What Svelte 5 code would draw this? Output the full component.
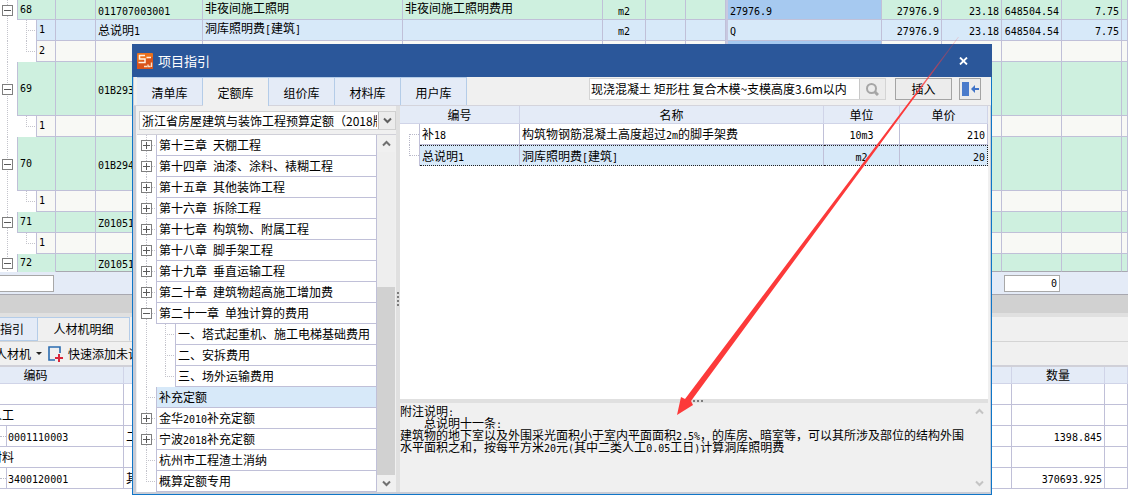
<script>
  const cells = (values) => Array.from({ length: 13 }, (_, i) => values[i] ?? '');

  const items = [
    { no: '68', size: 'first', kind: 'group', cells: cells(['', '011707003001', '非夜间施工照明', '非夜间施工照明费用', 'm2', '', '', '27976.9', '27976.9', '23.18', '648504.54', '7.75']) },
    { no: '1', size: 'row', kind: 'picked', child: true, more: true, cells: cells(['', '总说明1', '洞库照明费[建筑]', '', 'm2', '', '', 'Q', '27976.9', '23.18', '648504.54', '7.75']) },
    { no: '2', size: 'row', kind: 'plain', child: true, cells: cells([]) },
    { no: '69', size: 'tall', kind: 'group', cells: cells(['', '01B293']) },
    { no: '1', size: 'row', kind: 'plain', child: true, cells: cells([]) },
    { no: '70', size: 'tall', kind: 'group', cells: cells(['', '01B294']) },
    { no: '1', size: 'row', kind: 'plain', child: true, cells: cells([]) },
    { no: '71', size: 'row', kind: 'group', cells: cells(['', 'Z01051']) },
    { no: '1', size: 'row', kind: 'plain', child: true, cells: cells([]) },
    { no: '72', size: 'last', kind: 'group', cells: cells(['', 'Z01051']) }
  ];

  const align = ['', '', 'top', 'top', 'mid', '', '', 'wide', 'num', 'num', 'num', 'num', ''];

  const chapters = [
    { name: '第十三章 天棚工程', mark: '+' },
    { name: '第十四章 油漆、涂料、裱糊工程', mark: '+' },
    { name: '第十五章 其他装饰工程', mark: '+' },
    { name: '第十六章 拆除工程', mark: '+' },
    { name: '第十七章 构筑物、附属工程', mark: '+' },
    { name: '第十八章 脚手架工程', mark: '+' },
    { name: '第十九章 垂直运输工程', mark: '+' },
    { name: '第二十章 建筑物超高施工增加费', mark: '+' },
    { name: '第二十一章 单独计算的费用', mark: '-' },
    { name: '一、塔式起重机、施工电梯基础费用', sub: true },
    { name: '二、安拆费用', sub: true },
    { name: '三、场外运输费用', sub: true, end: true },
    { name: '补充定额', picked: true },
    { name: '金华2010补充定额', mark: '+' },
    { name: '宁波2018补充定额', mark: '+' },
    { name: '杭州市工程渣土消纳' },
    { name: '概算定额专用', end: true }
  ];

  const libraries = ['清单库', '定额库', '组价库', '材料库', '用户库'];
  let library = $state('定额库');
  let keyword = $state('现浇混凝土 矩形柱 复合木模~支模高度3.6m以内');

  const quotas = [
    { code: '补18', name: '构筑物钢筋混凝土高度超过2m的脚手架费', unit: '10m3', price: '210' },
    { code: '总说明1', name: '洞库照明费[建筑]', unit: 'm2', price: '20', picked: true }
  ];

  const notes = [
    '附注说明:',
    '    总说明十一条:',
    '建筑物的地下室以及外围采光面积小于室内平面面积2.5%，的库房、暗室等，可以其所涉及部位的结构外围',
    '水平面积之和，按每平方米20元(其中二类人工0.05工日)计算洞库照明费'
  ];

  const resources = [
    { code: '' },
    { code: '人工' },
    { code: '0001110003', child: true, name: '二类人工', qty: '1398.845' },
    { code: '材料' },
    { code: '3400120001', child: true, name: '其他材料费', qty: '370693.925' }
  ];

  const runs = (text) => text.match(/[\x20-\x7e]+|[^\x20-\x7e]+/g) ?? [];
  const latin = (run) => /^[\x20-\x7e]/.test(run);
</script>

{#snippet mix(text)}{#each runs(text) as run}{#if latin(run)}<span class="latin">{run}</span>{:else}{run}{/if}{/each}{/snippet}

{#snippet toggle(mark)}
  <svg class="toggle" width="11" height="11" viewBox="0 0 11 11" shape-rendering="crispEdges">
    <rect x="0.5" y="0.5" width="10" height="10" fill="#fff" stroke="#7f7f7f" />
    <path d={mark === '+' ? 'M2 5.5H9M5.5 2V9' : 'M2 5.5H9'} stroke="#5a5a5a" />
  </svg>
{/snippet}

{#snippet chevron(up)}
  <svg width="9" height="7" viewBox="0 0 9 7"><path d={up ? 'M1 5.5L4.5 2L8 5.5' : 'M1 1.5L4.5 5L8 1.5'} fill="none" stroke="currentColor" stroke-width="2" /></svg>
{/snippet}

<div class="page">
  <table class="items">
    <colgroup>
      <col class="w56" /><col class="w40" /><col class="w107" /><col class="w200" /><col class="w200" />
      <col class="w43" /><col class="w40" /><col class="w40" /><col class="w156" /><col class="w60" />
      <col class="w60" /><col class="w60" /><col class="w60" /><col />
    </colgroup>
    <tbody>
      {#each items as item}
        <tr class="{item.size} {item.kind}">
          <td class="tree">
            <div class="branch">
              <span class="rail">{#if !item.child}{@render toggle('-')}{/if}</span>
              {#if item.child}<span class="elbow" class:more={item.more}></span>{/if}
              <span class="no">{@render mix(item.no)}</span>
            </div>
          </td>
          {#each item.cells as value, i}
            <td class={align[i]}>{@render mix(value)}</td>
          {/each}
        </tr>
      {/each}
    </tbody>
  </table>

  <div class="totals">
    <input class="total" aria-label="编号合计" />
    <input class="total sum" aria-label="合计" value="0" />
  </div>
  <div class="splitter"></div>

  <nav class="tabs lower">
    <button class="guide">指引</button>
    <button class="active">人材机明细</button>
  </nav>
  <div class="toolbar">
    <button class="tool cut">人材机<i class="caret"></i></button>
    <button class="tool">
      <svg width="15" height="16" viewBox="0 0 15 16">
        <path d="M12 7V1H1V14H7" fill="none" stroke="#2b6cb0" stroke-width="1.6" />
        <path d="M11 8V16M7 12H15" stroke="#d9263a" stroke-width="2" />
      </svg>
      快速添加未计价
    </button>
  </div>
  <table class="resources">
    <colgroup><col class="w124" /><col /><col class="w93" /><col class="w23" /></colgroup>
    <thead>
      <tr><th class="shift">编码</th><th></th><th>数量</th><th></th></tr>
    </thead>
    <tbody>
      {#each resources as r}
        <tr>
          <td class={r.child ? 'leaf' : 'root'}>
            {#if r.child}
              <div class="twig"><span class="stub"></span><span class="code">{@render mix(r.code)}</span></div>
            {:else}{r.code}{/if}
          </td>
          <td>{r.name ?? ''}</td>
          <td class="num">{@render mix(r.qty ?? '')}</td>
          <td></td>
        </tr>
      {/each}
    </tbody>
  </table>

  <section class="dialog" aria-label="项目指引">
    <header>
      <svg width="16" height="16" viewBox="0 0 16 16">
        <rect width="16" height="16" rx="1" fill="#e8701e" />
        <path d="M0 9L16 4V15a1 1 0 0 1-1 1H0Z" fill="#d9541a" />
        <path d="M8 2.5H2.5V6H8V9.5H1.5M9.5 4.5H14" fill="none" stroke="#fff3e6" stroke-width="1.5" />
        <path d="M7 13.5H10M11 11.5V13.5H13.5M14.5 9.5V14" fill="none" stroke="#fbe0c8" stroke-width="1.4" />
      </svg>
      <h1>项目指引</h1>
      <button class="close" aria-label="关闭">
        <svg width="9" height="8" viewBox="0 0 9 8"><path d="M1 0.5L8 7.5M8 0.5L1 7.5" stroke="#fff" stroke-width="1.8" /></svg>
      </button>
    </header>

    <div class="bar">
      <nav class="tabs">
        {#each libraries as name}
          <button class:active={library === name} onclick={() => (library = name)}>{name}</button>
        {/each}
      </nav>
      <div class="search">
        <input aria-label="搜索" bind:value={keyword} />
        <button aria-label="查找">
          <svg width="13" height="13" viewBox="0 0 13 13"><circle cx="5.5" cy="5.5" r="4.5" fill="none" stroke="#a6a6a6" stroke-width="2" /><path d="M8.5 8.5L12 12" stroke="#a6a6a6" stroke-width="3" /></svg>
        </button>
      </div>
      <button class="push insert">插入</button>
      <button class="push side" aria-label="收起">
        <svg width="17" height="14" viewBox="0 0 17 14"><rect width="7" height="14" fill="#4a7bcb" /><path d="M9 7L13 3V6H17V8H13V11Z" fill="#3f73c8" /></svg>
      </button>
    </div>

    <div class="body">
      <div class="left">
        <div class="pick">
          <select aria-label="定额库">
            <option>浙江省房屋建筑与装饰工程预算定额（2018版）</option>
          </select>
          <span class="arrow">{@render chevron(false)}</span>
        </div>
        <div class="outline">
          <ul>
            {#each chapters as c}
              <li class:picked={c.picked} class:sub={c.sub}>
                <span class="rail" class:end={c.end && !c.sub}>{#if c.mark}{@render toggle(c.mark)}{/if}</span>
                {#if c.sub}<span class="elbow" class:more={!c.end}></span>{/if}
                <span class="name">{@render mix(c.name)}</span>
              </li>
            {/each}
          </ul>
          <div class="scroll">
            <span class="step">{@render chevron(true)}</span>
            <span class="track"></span>
            <span class="thumb"></span>
            <span class="step">{@render chevron(false)}</span>
          </div>
        </div>
      </div>
      <div class="grip upright"><i></i><i></i><i></i><i></i></div>
      <div class="right">
        <table class="quotas">
          <colgroup><col class="w20" /><col class="w100" /><col /><col class="w76" /><col class="w88" /></colgroup>
          <thead>
            <tr><th colspan="2">编号</th><th>名称</th><th>单位</th><th>单价</th></tr>
          </thead>
          <tbody>
            {#each quotas as q}
              <tr class:picked={q.picked}>
                <td class="link"><span class={q.picked ? 'low' : 'high'}></span></td>
                <td>{@render mix(q.code)}</td>
                <td>{@render mix(q.name)}</td>
                <td class="mid">{@render mix(q.unit)}</td>
                <td class="num">{@render mix(q.price)}</td>
              </tr>
            {/each}
          </tbody>
        </table>
        <div class="blank"></div>
        <div class="grip"><i></i><i></i><i></i><i></i><i></i></div>
        <div class="notes">
          <div class="lines">
            {#each notes as line}<p>{@render mix(line)}</p>{/each}
          </div>
          <div class="faint">{@render chevron(true)}{@render chevron(false)}</div>
        </div>
      </div>
    </div>
  </section>

  <svg class="pointer" width="290" height="380" viewBox="0 0 290 380">
    <defs>
      <linearGradient id="fade" gradientUnits="userSpaceOnUse" x1="282" y1="0" x2="236" y2="62">
        <stop offset="0" stop-color="#fc3a3a" stop-opacity="0.15" />
        <stop offset="1" stop-color="#fc3a3a" />
      </linearGradient>
    </defs>
    <path d="M282 1L14 365L16 369L0 379L4 361L8 363L281 1Z" fill="url(#fade)" />
  </svg>
</div>

<style>
  :global(body) { margin: 0; }
  * { box-sizing: border-box; }
  .page {
    position: relative;
    min-height: 100vh;
    overflow: hidden;
    background: #fff;
    color: #000;
    font: 12px/16px "Noto Sans CJK SC", sans-serif;
  }
  .latin { font-family: "DejaVu Sans Mono", monospace; font-size: 10px; line-height: 0; white-space: pre; }
  button, input, select { font: inherit; color: inherit; margin: 0; padding: 0; border: 0; border-radius: 0; outline: 0; }
  button { white-space: nowrap; }
  svg { display: block; flex: none; }

  table { width: 100%; table-layout: fixed; border-collapse: separate; border-spacing: 0; }
  td, th { padding: 0 2px; border: 0 solid #c0c0d8; border-width: 0 1px 1px 0; white-space: nowrap; overflow: hidden; font-weight: normal; text-align: left; line-height: 16px; }
  th { background: #e4ebf7; border-color: #d0d4e8; text-align: center; }
  .num { text-align: right; }
  .mid { text-align: center; }
  .w20 { width: 20px; } .w23 { width: 23px; } .w40 { width: 40px; } .w43 { width: 43px; }
  .w56 { width: 56px; } .w60 { width: 60px; } .w76 { width: 76px; } .w88 { width: 88px; }
  .w93 { width: 93px; } .w100 { width: 100px; } .w107 { width: 107px; } .w124 { width: 124px; }
  .w156 { width: 156px; } .w200 { width: 200px; }

  .items tr { height: 21px; }
  .items .first { height: 20px; }
  .items .tall { height: 54px; }
  .items .last { height: 18px; }
  .items .last td { border-bottom-color: #a8a8b0; }
  .items .last .no { border-bottom: 0; }
  .group td { background: #cef0df; }
  .picked td { background: #d7e9f9; }
  .plain td { background: #f8f9f5; }
  .items td.top { vertical-align: top; }
  .items td.wide { border-left: 2px solid #c8c8e0; }
  .items .first td.wide, .items tr:nth-child(3) td.wide { background: #a6c9f0; }
  .items .tree { padding: 0; border-bottom: 0; background: #fff; }
  .branch { display: flex; }
  .branch .rail { width: 17px; }
  .branch .no { flex: 1; display: flex; align-items: center; padding-left: 2px; border: 0 solid #c0c0d8; border-width: 0 0 1px 1px; }
  .first .branch { height: 20px; }
  .row .branch { height: 21px; }
  .tall .branch { height: 54px; }
  .last .branch { height: 18px; }
  .group .no { background: #cef0df; }
  .picked .no { background: #d7e9f9; }
  .plain .no { background: #f8f9f5; }

  .rail { display: flex; align-items: center; width: 19px; flex: none; background: repeating-linear-gradient(#c4c4cc 0 1px, #fff 1px 2px) 7px 0 / 1px 100% no-repeat; }
  .rail :global(svg) { margin-left: 2px; }
  .elbow { width: 19px; flex: none; background: repeating-linear-gradient(#c4c4cc 0 1px, #fff 1px 2px) 9px 0 / 1px 50% no-repeat, repeating-linear-gradient(90deg, #c4c4cc 0 1px, #fff 1px 2px) 9px 50% / 10px 1px no-repeat; }
  .elbow.more { background-size: 1px 100%, 10px 1px; }

  .totals { display: flex; justify-content: space-between; height: 23px; padding: 3px 68px 2px 0; background: #e4ebf7; border-bottom: 1px solid #a8a8b0; }
  .total { width: 54px; border: 1px solid #a8a8a8; border-left: 0; background: #fff; }
  .sum { width: 56px; border-left: 1px solid #a8a8a8; padding-right: 2px; text-align: right; font: 10px "DejaVu Sans Mono", monospace; }
  .splitter { height: 22px; background: #d1d1d1; border-bottom: 4px solid #e0e0e0; }

  .tabs { display: flex; }
  .tabs button { background: #e4ebf7; border: 1px solid #b4cce8; border-left-width: 0; text-align: center; }
  .tabs button.active { background: #f0f0f0; border-bottom-color: #f0f0f0; }
  .lower { height: 25px; background: #f0f0f0; border-bottom: 1px solid #d4d4d4; }
  .lower button { width: 92px; }
  .lower .guide { width: 38px; padding-right: 16px; text-align: right; }
  .toolbar { display: flex; align-items: center; gap: 6px; height: 25px; background: #f0f0f0; border-bottom: 2px solid #d0d0d8; }
  .tool { display: flex; align-items: center; gap: 5px; background: none; }
  .cut { margin-left: -5px; }
  .caret { border: 3px solid transparent; border-top-color: #222; border-bottom: 0; }

  .resources tr { height: 21px; }
  .resources thead tr { height: 17px; }
  .resources th.shift { padding-right: 54px; }
  .resources .root { text-indent: -12px; }
  .resources .leaf { padding: 0; }
  .twig { display: flex; align-items: center; }
  .stub { width: 6px; border-top: 1px dotted #b8b8c8; }
  .code { height: 20px; line-height: 20px; padding-left: 1px; border-left: 1px solid #c0c0d8; }

  .dialog { position: absolute; inset: 44px 136px 0 132px; display: flex; flex-direction: column; background: #f0f0f0; border: 1px solid #0f76c8; border-top: 0; }
  header { display: flex; align-items: center; gap: 5px; flex: none; height: 33px; margin: 0 -1px; padding: 0 24px 0 5px; background: #2b579a; color: #fff; }
  h1 { flex: 1; margin: 0; font-size: 13px; font-weight: normal; }
  .close { background: none; }
  .bar { display: flex; flex: none; height: 29px; padding: 0 10px 0 3px; border-left: 1px solid #c8ccd6; border-bottom: 1px solid #d4d4dc; }
  .bar .tabs { flex: 1; }
  .bar .tabs button { width: 66px; height: 28px; padding-top: 2px; border-bottom: 0; }
  .bar .tabs button.active { height: 29px; }
  .search { display: flex; height: 22px; margin-top: 1px; border: 1px solid #d4d4d4; background: #fff; }
  .search input { width: 269px; padding-left: 1px; background: #fff; }
  .search button { display: flex; align-items: center; justify-content: center; width: 26px; background: #ececec; border-left: 1px solid #c8c8c8; }
  .push { display: flex; align-items: center; justify-content: center; height: 22px; margin-top: 1px; background: #ececec; border: 1px solid #a4a4a4; }
  .insert { width: 57px; margin-left: 9px; }
  .side { width: 22px; margin-left: 7px; }

  .body { display: flex; flex: 1; min-height: 0; padding-right: 2px; border: 0 solid #c8ccd6; border-width: 0 1px 2px 3px; }
  .left { display: flex; flex-direction: column; width: 260px; flex: none; padding-left: 1px; }
  .pick { position: relative; display: flex; height: 19px; margin: 5px 0 4px 2px; border: 1px solid #d0d0d0; background: #fff; }
  select { appearance: none; width: 100%; padding: 0 18px 0 2px; background: #fff; overflow: hidden; }
  .arrow { position: absolute; inset: 0 0 0 auto; display: flex; align-items: center; justify-content: center; width: 17px; background: #ececec; border-left: 1px solid #b8b8b8; color: #606060; pointer-events: none; }
  .outline { display: flex; flex: 1; min-height: 0; border-top: 1px solid #d0d0d8; background: #fff; }
  ul { flex: 1; min-width: 0; margin: 0; padding: 0; list-style: none; overflow: hidden; }
  li { display: flex; height: 21px; }
  li .rail { background: repeating-linear-gradient(#c4c4cc 0 1px, #fff 1px 2px) 9px 0 / 1px 100% no-repeat, repeating-linear-gradient(90deg, #c4c4cc 0 1px, #fff 1px 2px) 9px 10px / 10px 1px no-repeat; }
  li .rail :global(svg) { margin-left: 4px; }
  li .rail.end { background-size: 1px 50%, 10px 1px; }
  li.sub .rail { background-size: 1px 100%, 0 0; }
  .name { flex: 1; padding-left: 2px; border: 0 solid #c0c0d8; border-width: 0 1px 1px 1px; line-height: 20px; white-space: nowrap; overflow: hidden; }
  .picked .name { background: #d7e9f9; }
  .scroll { display: flex; flex-direction: column; width: 19px; padding-right: 1px; background: #f0f0f0; }
  .step { display: flex; align-items: center; justify-content: center; height: 17px; color: #707070; }
  .track { flex: 135; background: #eeeeee; }
  .thumb { flex: 188; background: #d1d1d1; }

  .grip { display: flex; align-items: center; justify-content: center; gap: 2px; height: 4px; flex: none; background: #e0e0e0; }
  .grip i { width: 2px; height: 2px; background: #7c7c7c; }
  .upright { flex-direction: column; width: 4px; height: auto; }
  .right { display: flex; flex-direction: column; flex: 1; min-width: 0; }
  .quotas tr { height: 21px; }
  .quotas thead tr { height: 18px; }
  .quotas td { background: #fff; }
  .quotas .picked td { background: #d7e9f9; border-top: 1px dotted #222; border-bottom: 1px dotted #222; }
  .quotas .picked td:last-child { border-right: 1px dotted #222; }
  .quotas td.link, .quotas .picked td.link { padding: 0; border-top: 0; border-bottom: 0; background: #fff; }
  .link span { display: block; width: 10px; height: 11px; margin-left: 9px; border-left: 1px dotted #b8b8c8; }
  .high { margin-top: 10px; border-top: 1px dotted #b8b8c8; }
  .low { margin-bottom: 10px; border-bottom: 1px dotted #b8b8c8; }
  .blank { flex: 1; background: #fff; }
  .notes { display: flex; justify-content: space-between; height: 89px; flex: none; }
  .lines { padding-top: 2px; min-width: 0; }
  .lines p { margin: 0; line-height: 12px; white-space: nowrap; }
  .faint { display: flex; flex-direction: column; justify-content: space-between; width: 13px; padding: 5px 0; color: #c4c4c4; }
  .pointer { position: absolute; top: 36px; left: 677px; pointer-events: none; }
</style>
